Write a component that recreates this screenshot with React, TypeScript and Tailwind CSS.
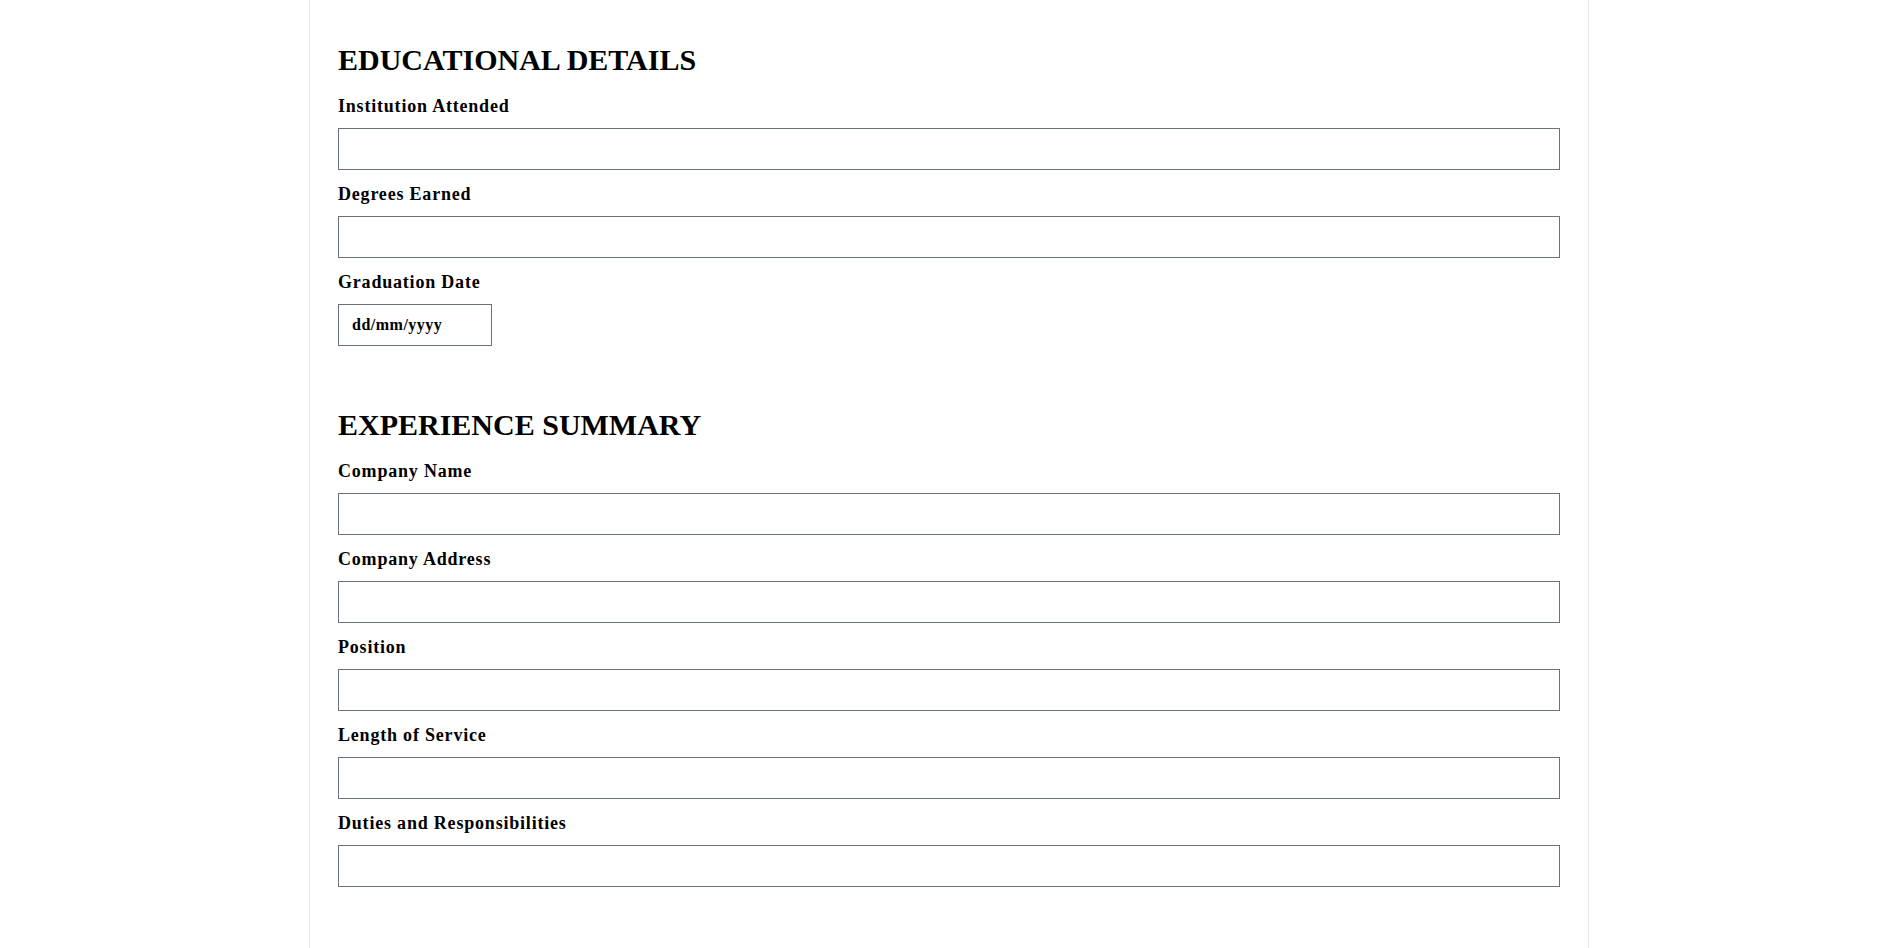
import React from 'react';

type Field = { label: string; kind?: 'date' };

const education: Field[] = [
    { label: 'Institution Attended' },
    { label: 'Degrees Earned' },
    { label: 'Graduation Date', kind: 'date' },
];

const experience: Field[] = [
    { label: 'Company Name' },
    { label: 'Company Address' },
    { label: 'Position' },
    { label: 'Length of Service' },
    { label: 'Duties and Responsibilities' },
];

function FormField({ label, kind }: Field) {
    return (
        <div className="flex flex-col">
            <label className="text-lg leading-7 font-bold tracking-[0.8px] mb-2">{label}</label>
            {kind === 'date' ? (
                <input
                    type="text"
                    placeholder="dd/mm/yyyy"
                    className="w-[154px] h-[42px] border border-gray-500 px-[13px] text-base font-bold tracking-[0.5px] placeholder:text-black outline-none"
                />
            ) : (
                <input type="text" className="w-full h-[42px] border border-gray-500 px-3 text-base outline-none" />
            )}
        </div>
    );
}

function Section({ title, fields }: { title: string; fields: Field[] }) {
    return (
        <section className="flex flex-col">
            <h2 className="text-3xl leading-9 font-bold mb-3.5">{title}</h2>
            <div className="flex flex-col gap-2.5">
                {fields.map((f) => (
                    <FormField key={f.label} {...f} />
                ))}
            </div>
        </section>
    );
}

export default function App() {
    return (
        <div className="min-h-screen bg-white text-black" style={{ fontFamily: '"Liberation Serif", "Times New Roman", serif' }}>
            <div className="max-w-7xl mx-auto min-h-screen border-x border-gray-200 px-7 pt-[42px] pb-16 flex flex-col gap-[61px]">
                {/* Education */}
                <Section title="EDUCATIONAL DETAILS" fields={education} />

                {/* Experience */}
                <Section title="EXPERIENCE SUMMARY" fields={experience} />
            </div>
        </div>
    );
}
